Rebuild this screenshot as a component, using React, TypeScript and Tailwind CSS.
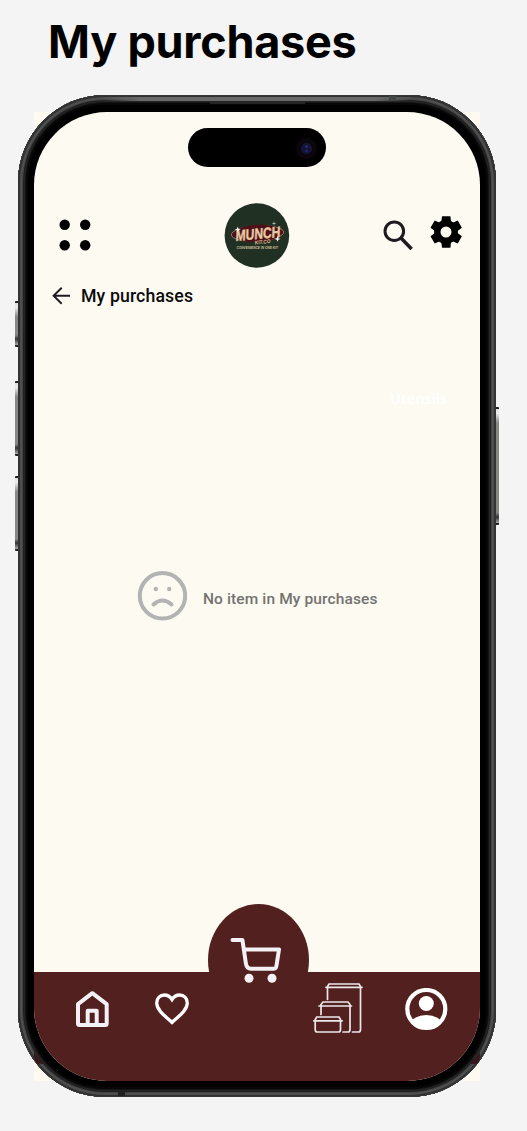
import React from "react";

function Logo() {
  return (
    <svg width="66" height="66" viewBox="0 0 66 66" className="block">
      <circle cx="32.900" cy="32.500" r="32.300" fill="#203124" />
      <g transform="rotate(-3 33 30.500)">
        <ellipse cx="33.500" cy="30.500" rx="26.200" ry="7.600" fill="#4d1219" stroke="#b98080" strokeWidth="0.800" />
        <ellipse cx="33.500" cy="30.500" rx="23" ry="8.800" fill="#4d1219" />
      </g>
      <g transform="rotate(-5 33 33) skewX(-7) translate(4 0)" fontFamily="'Liberation Sans', sans-serif" fontWeight="700">
        <text x="11.500" y="36" fontSize="15" textLength="45" lengthAdjust="spacingAndGlyphs" fill="#e6c9a2" stroke="#e6c9a2" strokeWidth="0.400">MUNCH</text>
        <text x="31" y="41.200" fontSize="5.400" textLength="16" lengthAdjust="spacingAndGlyphs" fill="#d9b68b">KIT.CO</text>
      </g>
      <text x="12.500" y="45.500" fontSize="3.600" fontFamily="'Liberation Sans', sans-serif" fontWeight="700" fontStyle="italic" textLength="41.500" lengthAdjust="spacingAndGlyphs" fill="#d4c39f">CONVENIENCE IN ONE KIT</text>
      <g fill="#fff">
        <path d="M13.700 23.500l.7 2.300 2.300.7-2.300.7-.7 2.300-.7-2.300-2.300-.7 2.300-.7z" />
        <path d="M53.500 33l.7 2.300 2.300.7-2.300.7-.7 2.300-.7-2.300-2.300-.7 2.300-.7z" />
        <path d="M50 18l.4 2 2 .5-2 .5-.4 2-.4-2-2-.5 2-.5z" fill="#b9cbb9" />
      </g>
    </svg>
  );
}

function SideButton({ place }: { place: string }) {
  return (
    <div
      className={`absolute w-[4px] rounded-[1px] border-y-2 border-[#222] bg-[linear-gradient(180deg,#ddd_0px,#eee_4px,#858783_14px,#858783_calc(100%-10px),#333_calc(100%-6px),#aaa_100%)] ${place}`}
    />
  );
}

function Header() {
  return (
    <header className="flex h-[66px] items-start">
      <svg width="32" height="32" viewBox="0 0 32 32" className="mt-[16px] ml-[25px]">
        <circle cx="5.700" cy="5.800" r="5.200" />
        <circle cx="26.200" cy="5.800" r="5.200" />
        <circle cx="5.700" cy="26.200" r="5.200" />
        <circle cx="26.200" cy="26.200" r="5.200" />
      </svg>
      <div className="ml-[133px]">
        <Logo />
      </div>
      <svg width="30" height="31" viewBox="0 0 30 31" fill="none" stroke="#1d1b20" className="mt-[17px] ml-[93px]">
        <circle cx="11.300" cy="11.200" r="9.300" strokeWidth="3" />
        <path d="M18 18.100L28.600 28.900" strokeWidth="3.500" />
      </svg>
      <svg width="34" height="34" viewBox="-17 -17 34 34" className="mt-[12px] ml-[16px]">
        <circle r="8.700" fill="none" stroke="#000" strokeWidth="6.400" />
        <g transform="translate(.2 0)">
          <path d="M-5 -9L-4.200 -15.700H4.200L5 -9L2 -6.500H-2Z" />
          <path d="M-5 -9L-4.200 -15.700H4.200L5 -9L2 -6.500H-2Z" transform="rotate(60)" />
          <path d="M-5 -9L-4.200 -15.700H4.200L5 -9L2 -6.500H-2Z" transform="rotate(120)" />
          <path d="M-5 -9L-4.200 -15.700H4.200L5 -9L2 -6.500H-2Z" transform="rotate(180)" />
          <path d="M-5 -9L-4.200 -15.700H4.200L5 -9L2 -6.500H-2Z" transform="rotate(240)" />
          <path d="M-5 -9L-4.200 -15.700H4.200L5 -9L2 -6.500H-2Z" transform="rotate(300)" />
        </g>
      </svg>
    </header>
  );
}

function EmptyState() {
  return (
    <div className="mt-[161px] ml-[103px] flex h-[50px] items-start">
      <svg width="50" height="50" viewBox="0 0 50 50" fill="none" stroke="#b3b3b3">
        <circle cx="25.500" cy="24.800" r="22.700" strokeWidth="4" />
        <path d="M16.500 33.500Q25.500 25.500 34.500 33.500" strokeWidth="4" strokeLinecap="round" />
        <circle cx="18.800" cy="18" r="2.200" fill="#b3b3b3" stroke="none" />
        <circle cx="32.200" cy="18" r="2.200" fill="#b3b3b3" stroke="none" />
      </svg>
      <p className="mt-[16px] ml-[16px] text-[15.500px] leading-[24px] font-medium tracking-[0.120px] whitespace-nowrap text-[#737370]">
        No item in My purchases
      </p>
    </div>
  );
}

function BottomNav() {
  return (
    <nav className="relative mt-auto flex h-[109px] shrink-0 items-start bg-[#52201e]">
      <div className="absolute -top-[68px] left-[174px] h-[112px] w-[101px] rounded-[50%] bg-[#52201e]" />
      <svg width="34" height="38" viewBox="0 0 34 38" fill="none" stroke="#f3f1f5" strokeWidth="4" strokeLinejoin="round" className="mt-[18px] ml-[41px]">
        <path d="M3 14.200L17.300 3.200L31.700 14.200V33.500Q31.700 35 30.200 35H4.500Q3 35 3 33.500Z" />
        <path d="M12.700 35V20.700H21.700V35" />
      </svg>
      <svg width="36" height="34" viewBox="0 0 36 34" fill="none" stroke="#fff" strokeWidth="3.300" className="mt-[20px] ml-[45px]">
        <path d="M18 30.500C11 24 2.700 18 2.700 11C2.700 6 6.200 3 10.300 3C13.700 3 16.300 4.800 18 7.500C19.700 4.800 22.300 3 25.700 3C29.800 3 33.300 6 33.300 11C33.300 18 25 24 18 30.500Z" />
      </svg>
      <svg width="52" height="47" viewBox="0 0 52 47" fill="none" stroke="#f3f1f5" strokeWidth="4" strokeLinecap="round" strokeLinejoin="round" className="relative -mt-[35px] ml-[40px]">
        <path d="M2.500 2.900H12.400L15.900 26.500Q16.700 31.700 21 31.700H44Q46 31.700 46.500 28.500L49 12.500H14.700" />
        <circle cx="19" cy="41.300" r="4.500" fill="#f3f1f5" stroke="none" />
        <circle cx="42" cy="41.300" r="4.500" fill="#f3f1f5" stroke="none" />
      </svg>
      <svg width="52" height="52" viewBox="0 0 52 52" fill="none" stroke="#eee8ea" strokeWidth="1.700" strokeLinecap="round" className="mt-[10px] ml-[31px]">
        <path d="M14.500 17.500V4.500L16 2H46L47.500 4.500V47.500Q47.500 50 45.500 50H39.500M13 5.300H49" />
        <path d="M8 32.500V22.500L10 20H35L37 22.500V47.500Q37 50 35 50H30M6 24H38.500" />
        <path d="M2.200 39V47.500Q2.200 50 4.200 50H25.500Q27.500 50 27.500 47.500V37.500L26 35H3.700L2.200 37.500V39M.8 38.800H29.200" />
      </svg>
      <svg width="43" height="43" viewBox="0 0 43 43" className="mt-[16px] ml-[40px]">
        <circle cx="21.300" cy="21" r="19" fill="none" stroke="#fff" strokeWidth="4.200" />
        <circle cx="21.300" cy="15.500" r="7.500" fill="#fff" />
        <path d="M7.500 31.500Q13.500 27 21.300 27T35 31.500Q30 40 21.300 40T7.500 31.500Z" fill="#fff" />
      </svg>
    </nav>
  );
}

function Phone() {
  return (
    <div className="relative mt-[25px] ml-[18px] h-[1002px] w-[478px]">
      <div className="absolute top-[17px] left-[16px] h-[969px] w-[446px] bg-[#fefaf2]" />
      <SideButton place="top-[206px] left-[-3px] h-[46px]" />
      <SideButton place="top-[286px] left-[-3px] h-[75px]" />
      <SideButton place="top-[381px] left-[-3px] h-[75px]" />
      <SideButton place="top-[312px] right-[-3px] h-[118px]" />
      <div className="relative h-full rounded-[87px] bg-black px-[16px] pt-[17px] pb-[16px] shadow-[inset_0_0_0_1px_#343536,inset_0_0_0_2px_#303132,inset_0_0_0_3px_#4d4d4d,inset_0_0_0_4px_#515151,inset_0_0_0_5px_#434343,inset_0_0_0_6px_#202020,inset_0_0_0_7px_#252525,inset_0_0_0_8px_#141414,inset_0_0_0_10px_#070707]">
        <div className="absolute top-[2px] left-[84px] h-[4px] w-[310px] bg-[linear-gradient(90deg,transparent,#696969_12%,#696969_88%,transparent)]" />
        <div className="absolute top-[1px] left-[371px] h-[5px] w-[7px] bg-[#424744]" />
        <div className="absolute top-[7px] left-[192px] h-[2px] w-[95px] bg-[#252625]" />
        <div className="absolute bottom-[1px] left-[100px] h-[5px] w-[7px] bg-[#222]" />
        <svg width="478" height="14" viewBox="0 0 478 14" fill="#38161a" className="absolute top-[956px] left-0">
          <path d="M16 1Q20 7 26 13L19 12.500Q16 9 16 5Z" />
          <path d="M462 1Q458 7 452 13L459 12.500Q462 9 462 5Z" />
        </svg>
        <main className="relative flex h-full flex-col overflow-hidden rounded-[73px] bg-[#fdfaf2] font-['Roboto',sans-serif]">
          <div className="mt-[16px] ml-[154px] flex h-[39px] w-[138px] shrink-0 items-center justify-end rounded-full bg-black pr-[9px]">
            <svg width="22" height="22" viewBox="0 0 22 22">
              <circle cx="11.500" cy="11.500" r="10.500" fill="#0a060c" />
              <circle cx="11.500" cy="11.500" r="5" fill="#111434" stroke="#191b3e" />
              <circle cx="11.500" cy="9.500" r="1.200" fill="#32328a" />
              <circle cx="11.500" cy="14" r="1.400" fill="#222278" />
            </svg>
          </div>
          <div className="mt-[36px]">
            <Header />
          </div>
          <div className="mt-[15px] ml-[18px] flex h-[24px] items-center">
            <svg width="18" height="18" viewBox="0 0 18 18" fill="none" stroke="#1d1b20" strokeWidth="1.900" className="-mt-px">
              <path d="M9.700 .8L1.600 8.800L9.700 16.800M1.600 8.800H18" />
            </svg>
            <h2 className="ml-[11px] text-[17.700px] leading-[24px] font-medium tracking-[0.120px] whitespace-nowrap text-[#0b0b0b]">My purchases</h2>
          </div>
          <p className="mt-[78px] mr-[33px] self-end font-['Noto_Sans',sans-serif] text-[14.500px] leading-[24px] font-semibold text-white">Utensils</p>
          <EmptyState />
          <BottomNav />
        </main>
      </div>
    </div>
  );
}

export default function App() {
  return (
    <div className="h-[1131px] w-[527px] overflow-hidden bg-[#f4f4f4]">
      <h1 className="ml-[48px] pt-[14px] font-['Inter',sans-serif] text-[45px] leading-[56px] font-bold tracking-[-0.250px] whitespace-nowrap text-black">
        My purchases
      </h1>
      <Phone />
    </div>
  );
}
